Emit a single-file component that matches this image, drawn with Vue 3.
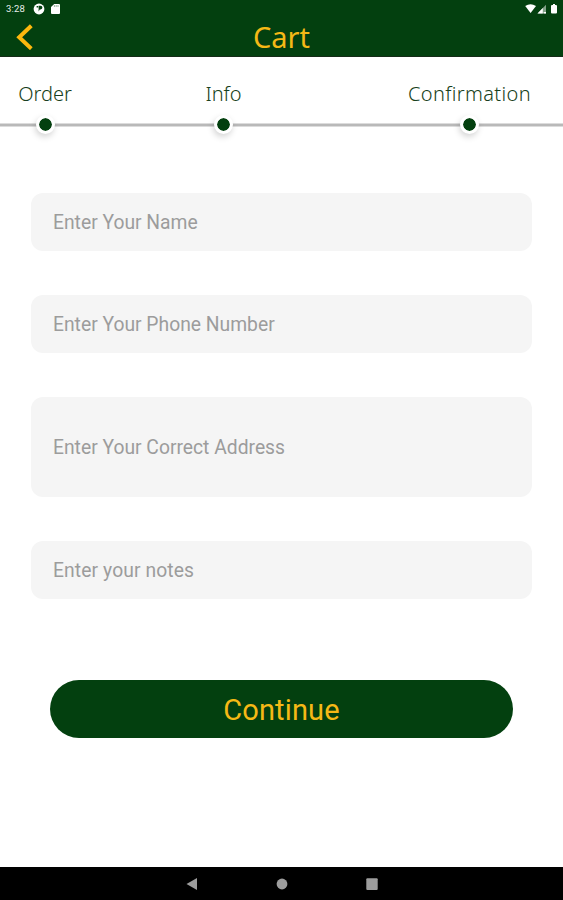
<script setup>
import { reactive } from 'vue'

const steps = [
  { key: 'order', label: 'Order' },
  { key: 'info', label: 'Info' },
  { key: 'confirmation', label: 'Confirmation' },
]

const fields = [
  { key: 'name', placeholder: 'Enter Your Name' },
  { key: 'phone', placeholder: 'Enter Your Phone Number' },
  { key: 'address', placeholder: 'Enter Your Correct Address', tall: true },
  { key: 'notes', placeholder: 'Enter your notes' },
]

const form = reactive({ name: '', phone: '', address: '', notes: '' })
</script>

<template>
  <div class="screen">
    <header class="header">
      <div class="status">
        <span class="clock">3:28</span>
        <svg class="app-icon" width="12" height="12" viewBox="0 0 12 12">
          <circle cx="6" cy="6" r="5.4" fill="#fff" />
          <path d="M3.6 3h1.5v1.5H3.6zM5.6 2.8h2a1.8 1.8 0 0 1 0 3.6H6.8L5.6 8.6z" fill="#03400f" />
        </svg>
        <svg class="sd-icon" width="9" height="10" viewBox="0 0 9 10">
          <path d="M3.2 0H8a1 1 0 0 1 1 1v8a1 1 0 0 1-1 1H1a1 1 0 0 1-1-1V3z" fill="#fff" />
          <path d="M3.4 1.2v1.6M5.2 1.2v1.6M7 1.2v1.6" stroke="#03400f" stroke-width=".5" />
        </svg>
        <svg class="system-icons" width="33" height="10" viewBox="0 0 33 10">
          <path d="M.2 2Q5.5-1.6 11 2L5.6 9z" fill="#fff" />
          <path d="M12.5 9.5L21 .8v8.7z" fill="#fff" opacity=".5" />
          <path d="M12.5 9.5L17.8 4v5.5zM18.6 8h2.4v1.5h-2.4z" fill="#fff" />
          <path d="M27 1h1V0h2v1h1q1 0 1 1v6.5q0 1-1 1h-4q-1 0-1-1V2q0-1 1-1z" fill="#fff" />
        </svg>
      </div>
      <div class="titlebar">
        <svg class="back" width="18" height="26" viewBox="0 0 18 26">
          <path d="M15.3 1.8L3.2 13.3l12.1 11.4" fill="none" stroke="#fdb80d" stroke-width="4" />
        </svg>
        <h1 class="title">Cart</h1>
      </div>
    </header>

    <nav class="steps">
      <div v-for="step in steps" :key="step.key" class="step" :class="step.key">
        <span class="label">{{ step.label }}</span>
        <span class="dot"></span>
      </div>
    </nav>

    <form class="form" @submit.prevent>
      <input
        v-for="field in fields"
        :key="field.key"
        v-model="form[field.key]"
        class="field"
        :class="[field.key, { tall: field.tall }]"
        type="text"
        :placeholder="field.placeholder"
      />
      <button class="continue" type="submit">Continue</button>
    </form>

    <footer class="navbar">
      <svg width="12" height="14" viewBox="0 0 12 14"><path d="M.5 7L11 1v12z" fill="#9d9d9d" /></svg>
      <svg width="12" height="12" viewBox="0 0 12 12"><circle cx="6" cy="6" r="5.4" fill="#9d9d9d" /></svg>
      <svg width="12" height="12" viewBox="0 0 12 12"><rect x=".3" y=".3" width="11.4" height="11.6" rx="1" fill="#9d9d9d" /></svg>
    </footer>
  </div>
</template>

<style>
body {
  margin: 0;
  background: #fff;
}
</style>

<style scoped>
.screen {
  box-sizing: border-box;
  width: 563px;
  height: 900px;
  display: flex;
  flex-direction: column;
  overflow: hidden;
  background: #fff;
  font-family: Roboto, sans-serif;
}
.header {
  box-sizing: border-box;
  height: 57px;
  flex: none;
  background: #03400f;
  border-bottom: 1px solid #152b18;
}
.status {
  display: flex;
  align-items: center;
  height: 18px;
  padding: 0 5px 0 6px;
}
.clock {
  width: 27px;
  font-size: 9.5px;
  line-height: 18px;
  letter-spacing: 0.2px;
  color: #e8eee9;
}
.sd-icon {
  margin-left: 6px;
}
.system-icons {
  margin-left: auto;
}
.titlebar {
  display: grid;
  grid-template-columns: 60px 1fr 60px;
  height: 38px;
}
.back {
  margin: 6px 0 0 16px;
}
.title {
  margin: 0;
  text-align: center;
  font: 400 29px/38px "Noto Sans", sans-serif;
  color: #f5b916;
}
.steps {
  display: grid;
  grid-template-columns: 90px 267px 1fr;
  height: 79px;
  flex: none;
  box-sizing: border-box;
  padding-top: 23px;
  background: linear-gradient(#dcdcdc 25%, #b9b9b9 25% 75%, #dcdcdc 75%) 0 66px / 100% 4px no-repeat;
}
.step {
  display: flex;
  flex-direction: column;
  align-items: center;
}
.step.confirmation {
  padding-right: 13px;
  margin-left: 32px;
}
.label {
  height: 35px;
  font: 300 20px/28px "Noto Sans", sans-serif;
  color: #173f20;
}
.confirmation .label {
  letter-spacing: 0.35px;
}
.dot {
  width: 13px;
  height: 13px;
  border: 3px solid #fff;
  border-radius: 50%;
  background: #03400f;
  background-clip: padding-box;
  box-shadow: -1px 3px 6px rgba(0, 0, 0, 0.17);
}
.form {
  display: flex;
  flex-direction: column;
  padding: 57px 31px 0;
}
.field {
  box-sizing: border-box;
  width: 501px;
  height: 58px;
  margin: 0 0 44px;
  padding: 0 21px 0 22px;
  border: 0;
  border-radius: 12px;
  outline: 0;
  background: #f5f5f5;
  font: 400 19.3px/24px Roboto, sans-serif;
  color: #333;
}
.field.tall {
  height: 100px;
}
.field.notes {
  letter-spacing: 0.1px;
}
.field::placeholder {
  color: #9c9c9c;
  opacity: 1;
}
.continue {
  width: 463px;
  height: 58px;
  margin: 37px 0 0 19px;
  padding: 2px 0 0;
  border: 0;
  border-radius: 29px;
  background: #03400f;
  font: 400 29px/34px Roboto, sans-serif;
  letter-spacing: 0.15px;
  color: #f5b916;
}
.navbar {
  box-sizing: border-box;
  display: flex;
  align-items: center;
  justify-content: center;
  gap: 78px;
  height: 33px;
  flex: none;
  margin-top: auto;
  background: #000;
}
</style>
